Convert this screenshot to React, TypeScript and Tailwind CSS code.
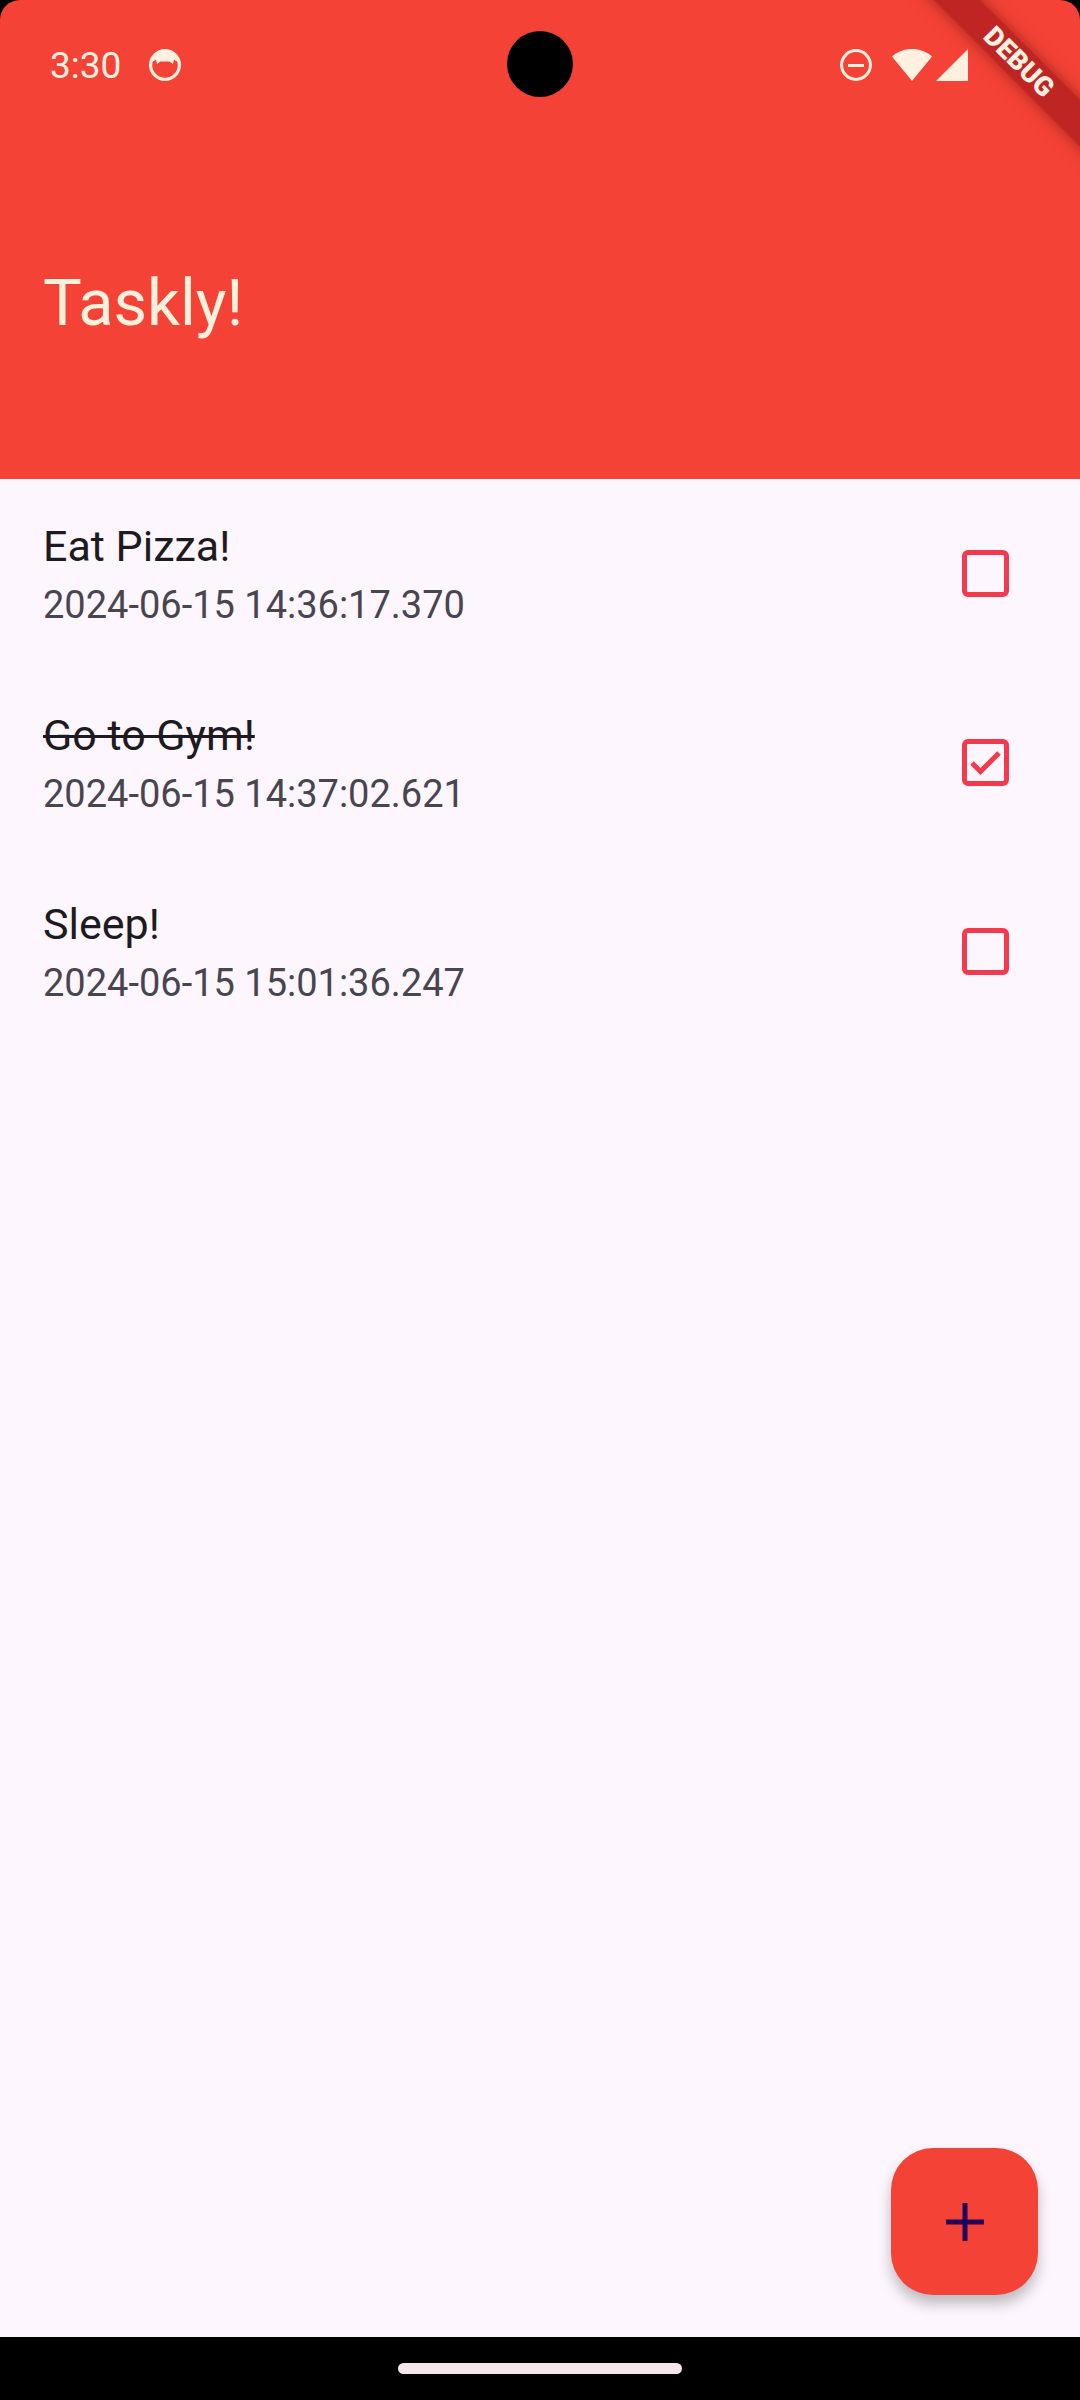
import { useState } from "react";

type Task = { content: string; timestamp: string; done: boolean };

const initialTasks: Task[] = [
  { content: "Eat Pizza!", timestamp: "2024-06-15 14:36:17.370", done: false },
  { content: "Go to Gym!", timestamp: "2024-06-15 14:37:02.621", done: true },
  { content: "Sleep!", timestamp: "2024-06-15 15:01:36.247", done: false },
];

function FaceIcon() {
  return (
    <svg className="size-8" viewBox="0 0 32 32" aria-hidden="true">
      <circle cx="16" cy="16" r="14.4" fill="none" stroke="currentColor" strokeWidth="3.2" />
      <path
        d="M2 13 C3 5 9 0.500 16 0.500 C23 0.500 29 5 30 13 L27 12 L25 10.500 L24 15 L20.500 12.500 H11.500 L8 15 L7 10.500 L5 12 Z"
        fill="currentColor"
      />
    </svg>
  );
}

function DoNotDisturbIcon() {
  return (
    <svg className="size-8" viewBox="0 0 32 32" fill="none" stroke="currentColor" strokeWidth="3" aria-hidden="true">
      <circle cx="16" cy="16" r="14.4" />
      <path d="M8 16.500H24" />
    </svg>
  );
}

function WifiIcon() {
  return (
    <svg className="h-8 w-10" viewBox="0 0 40 32" fill="currentColor" aria-hidden="true">
      <path d="M20 32 L0 7.500 C5.500 2.500 12.500 0 20 0 C27.500 0 34.500 2.500 40 7.500 Z" />
    </svg>
  );
}

function SignalIcon() {
  return (
    <svg className="size-8" viewBox="0 0 32 32" fill="currentColor" aria-hidden="true">
      <path d="M0 32 L32 0 V32 Z" />
    </svg>
  );
}

function StatusBar() {
  return (
    <div className="grid h-[130px] grid-cols-3 items-center pr-28 pl-[50px] text-[#fff0e0]">
      <div className="flex items-center gap-7">
        <span className="text-[37px] leading-none">3:30</span>
        <FaceIcon />
      </div>
      <div />
      <div className="flex items-center justify-end gap-1">
        <DoNotDisturbIcon />
        <span className="ml-4 flex">
          <WifiIcon />
        </span>
        <SignalIcon />
      </div>
      <div className="absolute top-[31px] left-1/2 size-[66px] -translate-x-1/2 rounded-full bg-black" />
    </div>
  );
}

function DebugBanner() {
  return (
    <div className="absolute top-[46px] -right-[139px] flex h-8 w-[400px] rotate-45 items-center justify-center bg-[#a3161a]/65 text-[27px] leading-none font-black text-[#fff0e0] shadow-[0_0_16px_rgba(90,0,0,0.5)]">
      DEBUG
    </div>
  );
}

function TaskRow({ task, onToggle }: { task: Task; onToggle: () => void }) {
  return (
    <li>
      <label className="flex h-[189px] items-center justify-between pr-[71px] pl-[43px]">
        <span className="flex flex-col">
          <span className={task.done ? "text-[43px] leading-[62px] text-[#1d1b20] line-through decoration-[3px]" : "text-[43px] leading-[62px] text-[#1d1b20]"}>
            {task.content}
          </span>
          <span className="text-[38px] leading-[56px] text-[#49454f]">{task.timestamp}</span>
        </span>
        <span className="relative flex">
          <input
            type="checkbox"
            checked={task.done}
            onChange={onToggle}
            className="peer size-[47px] appearance-none rounded-md border-5 border-[#f23a4c]"
          />
          <svg
            className="pointer-events-none absolute inset-0 hidden size-full peer-checked:block"
            viewBox="0 0 47 47"
            fill="none"
            stroke="#f23a4c"
            strokeWidth="5"
            aria-hidden="true"
          >
            <path d="M10 24 L18.500 32.500 L37 14" />
          </svg>
        </span>
      </label>
    </li>
  );
}

export default function App() {
  const [tasks, setTasks] = useState(initialTasks);
  const toggle = (index: number) =>
    setTasks(tasks.map((task, i) => (i === index ? { ...task, done: !task.done } : task)));

  return (
    <div className="flex min-h-screen flex-col bg-black font-[Roboto,sans-serif]">
      <header className="relative overflow-hidden rounded-t-[20px] bg-[#f44336] pb-[136px]">
        <StatusBar />
        <h1 className="mt-[133px] px-[43px] text-[65px] leading-20 text-[#fff0dc]">Taskly!</h1>
        <DebugBanner />
      </header>
      <main className="relative flex grow flex-col bg-[#fdf6fe]">
        <ul>
          {tasks.map((task, i) => (
            <TaskRow key={task.timestamp} task={task} onToggle={() => toggle(i)} />
          ))}
        </ul>
        <button
          type="button"
          aria-label="Add task"
          className="absolute right-[42px] bottom-[42px] flex size-[147px] items-center justify-center rounded-[42px] bg-[#f44336] shadow-[0_9px_14px_rgba(0,0,0,0.25)]"
        >
          <svg className="size-[38px]" viewBox="0 0 38 38" stroke="#21005d" strokeWidth="5" aria-hidden="true">
            <path d="M19 0V38M0 19H38" />
          </svg>
        </button>
      </main>
      <footer className="flex h-[63px] items-center justify-center">
        <div className="h-[11px] w-[284px] rounded-full bg-[#f7e6ec]" />
      </footer>
    </div>
  );
}
